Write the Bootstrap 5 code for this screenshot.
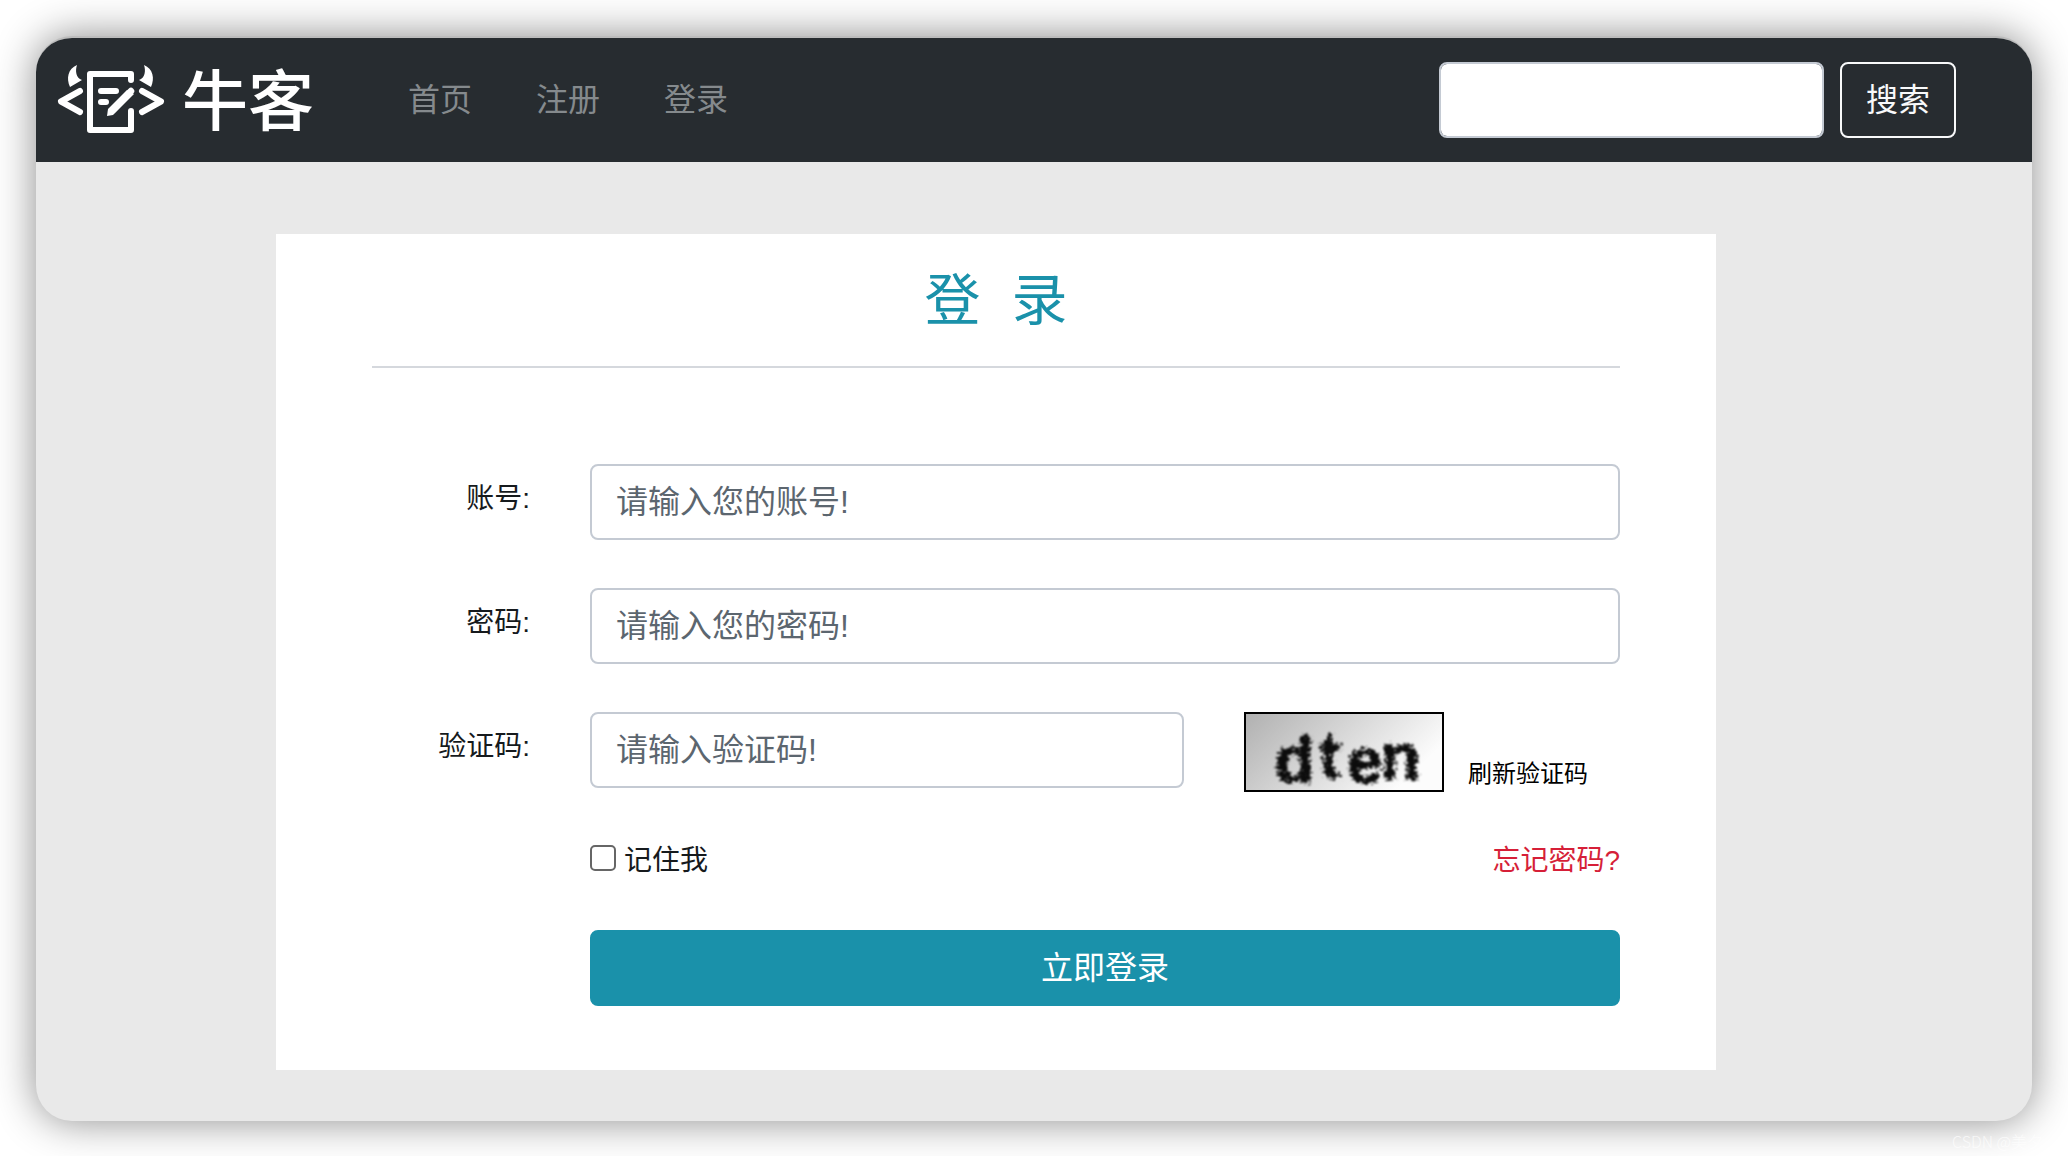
<!DOCTYPE html>
<html lang="zh-CN">
<head>
<meta charset="utf-8">
<meta name="viewport" content="width=device-width, initial-scale=1">
<title>牛客 - 登录</title>
<link href="https://cdn.jsdelivr.net/npm/bootstrap@5.3.0/dist/css/bootstrap.min.css" rel="stylesheet">
<style>
  :root { --teal: #1a91aa; --nav: #272c30; --line: #c4cad3; }
  body { font-family: "Liberation Sans", "Noto Sans CJK SC", sans-serif; font-size: 28px; line-height: 42px; color: #161a1d; background: #fff; }
  .stage { min-height: 100vh; padding: 36px; }
  .app-window { border-radius: 36px; background: #e9e9e9; box-shadow: 0 0 42px rgba(0,0,0,.46); overflow: hidden; border-top: 2px solid #bcbcbc; }
  .site-bar { background: var(--nav); height: 124px; padding: 0 76px 0 20px; }
  .brand-word { font-size: 66px; line-height: 80px; font-weight: 500; margin-left: 16px; padding-top: 4px; color: #fff; }
  .site-bar .nav { margin-left: 62px; }
  .site-bar .nav-link { font-size: 32px; line-height: 48px; padding: 0 32px; color: #858a8d; }
  .form-control, .btn { font-size: 32px; line-height: 48px; border-width: 2px; border-radius: 8px; padding: 12px 24px; }
  .form-control { border-color: var(--line); }
  .form-control::placeholder { color: #5c666f; opacity: 1; }
  .search-field { width: 385px; }
  .main-area { padding: 72px 316px 51px 240px; }
  .login-card { background: #fff; padding: 24px 96px 64px; }
  .login-title { font-size: 56px; line-height: 86px; color: var(--teal); padding-bottom: 22px; border-bottom: 2px solid #d5d8dd; margin-bottom: 96px; font-weight: 400; }
  .form-line { --bs-gutter-x: 60px; margin-bottom: 48px; }
  .field-label { padding-top: 14px; text-align: right; }
  .refresh-link { font-size: 24px; line-height: 36px; color: #000; text-decoration: none; margin-left: 24px; }
  .captcha-col { height: 80px; }
  .remember-box { appearance: none; width: 26px; height: 26px; border: 2px solid #666; border-radius: 5px; background: #fff; margin: 0 8px 6px 0; }
  .remember-box:checked { background: var(--teal); }
  .forgot-link { color: #d61f38; text-decoration: none; }
  .submit-btn, .submit-btn:hover { background: var(--teal); border-color: var(--teal); color: #fff; }
  .credit { position: absolute; right: 0; bottom: 4px; width: 116px; font-family: "Noto Sans CJK SC", sans-serif; font-weight: 300; font-size: 16px; line-height: 24px; color: rgba(255,255,255,.7); white-space: nowrap; }
</style>
</head>
<body>
<div class="stage position-relative">
  <div class="app-window">
    <header class="site-bar d-flex align-items-center">
      <a href="#" class="d-flex align-items-center text-decoration-none">
        <svg width="110" height="74" viewBox="0 0 110 74" fill="none" stroke="#fff" stroke-width="6" stroke-linecap="round" stroke-linejoin="round" aria-hidden="true">
          <path d="M24 28 5 38.500 24 49M86 28 105 38.500 86 49"/>
          <path d="M75 17V11H34V67H75V48"/>
          <path d="M45 28H60M45 39H50"/>
          <path d="M75 28 57 47" stroke-width="6.500"/>
          <path d="M71 27 78 31 57 52 51 53 52 46Z" fill="#fff" stroke="none"/>
          <path d="M21 2C12 6 10 15 14 24L26 17C20 15 19 8 21 2ZM88 2C97 6 99 15 95 24L83 17C89 15 90 8 88 2Z" fill="#fff" stroke="none"/>
        </svg>
        <span class="brand-word">牛客</span>
      </a>
      <nav class="nav flex-grow-1">
        <a class="nav-link" href="#">首页</a>
        <a class="nav-link" href="#">注册</a>
        <a class="nav-link" href="#">登录</a>
      </nav>
      <form class="d-flex gap-3">
        <input class="form-control search-field" type="search" aria-label="搜索">
        <button class="btn btn-outline-light text-nowrap" type="button">搜索</button>
      </form>
    </header>
    <main class="main-area">
      <form class="login-card">
        <h1 class="login-title text-center">登&nbsp;&nbsp;录</h1>
        <div class="row form-line">
          <label class="col-2 field-label" for="account">账号:</label>
          <div class="col-10"><input class="form-control" id="account" type="text" placeholder="请输入您的账号!"></div>
        </div>
        <div class="row form-line">
          <label class="col-2 field-label" for="password">密码:</label>
          <div class="col-10"><input class="form-control" id="password" type="password" placeholder="请输入您的密码!"></div>
        </div>
        <div class="row form-line">
          <label class="col-2 field-label" for="captcha">验证码:</label>
          <div class="col-6"><input class="form-control" id="captcha" type="text" placeholder="请输入验证码!"></div>
          <div class="col-4 captcha-col d-flex align-items-end">
            <svg class="flex-shrink-0 overflow-visible" width="200" height="80" viewBox="0 0 200 80" role="img" aria-label="dten">
              <defs>
                <linearGradient id="shade" x2="1" y2=".4"><stop stop-color="#b0b0b0"/><stop offset="1" stop-color="#fcfcfc"/></linearGradient>
                <filter id="ripple" x="-10%" y="-20%" width="120%" height="140%" color-interpolation-filters="sRGB">
                  <feTurbulence type="fractalNoise" baseFrequency=".25 .4" numOctaves="2" seed="4"/>
                  <feDisplacementMap in="SourceGraphic" scale="13" xChannelSelector="R" yChannelSelector="G"/>
                  <feGaussianBlur stdDeviation=".9"/>
                </filter>
              </defs>
              <rect x="1" y="1" width="198" height="78" fill="url(#shade)" stroke="#000" stroke-width="2"/>
              <g filter="url(#ripple)" font-family="Liberation Sans" font-size="64" font-weight="700" fill="#0c0c0c" stroke="#0c0c0c">
                <text x="31" y="70">d</text><text x="75" y="66">t</text><text x="103" y="71">e</text><text x="137" y="67">n</text>
              </g>
            </svg>
            <a class="refresh-link text-nowrap" href="#">刷新验证码</a>
          </div>
        </div>
        <div class="row form-line">
          <div class="col-10 offset-2 d-flex justify-content-between">
            <label class="d-flex align-items-center" for="remember"><input class="remember-box" id="remember" type="checkbox">记住我</label>
            <a class="forgot-link" href="#">忘记密码?</a>
          </div>
        </div>
        <div class="row form-line mb-0">
          <div class="col-10 offset-2"><button class="btn submit-btn w-100" type="button">立即登录</button></div>
        </div>
      </form>
    </main>
  </div>
  <div class="credit">CSDN @美夕</div>
</div>
<script src="https://cdn.jsdelivr.net/npm/bootstrap@5.3.0/dist/js/bootstrap.bundle.min.js"></script>
</body>
</html>
